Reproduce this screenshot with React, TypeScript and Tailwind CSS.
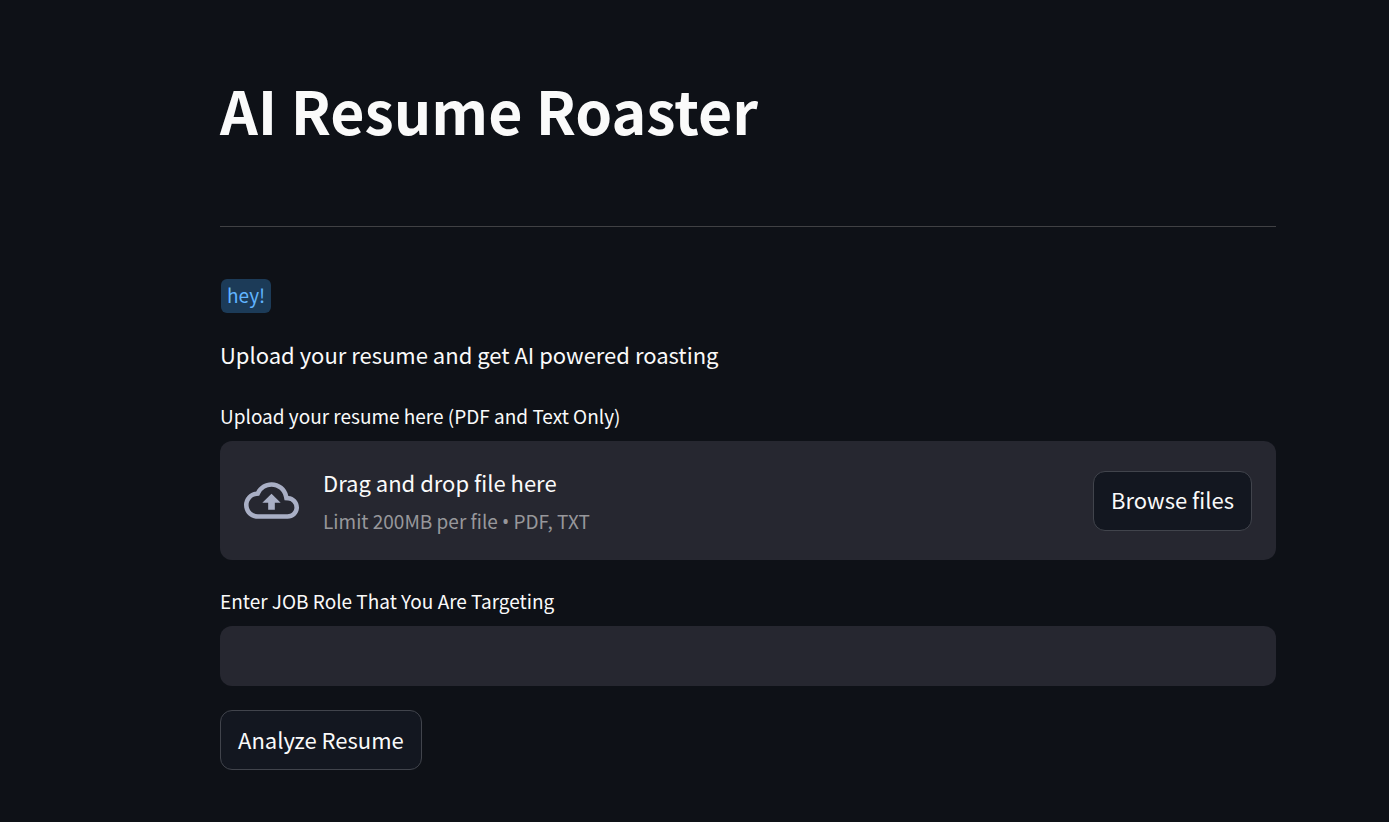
import React, { useRef } from "react";

const button =
  "h-[60px] rounded-xl border border-[#41444c] bg-[#131720] px-[17px] pb-[3px] text-[22px] leading-[36px] text-[#fafafa]";

export default function App() {
  const fileInput = useRef<HTMLInputElement>(null);
  return (
    <div className="min-h-screen bg-[#0e1117] pt-[68px] pr-[113px] pb-12 pl-[220px] font-['Noto_Sans_CJK_SC','Noto_Sans',sans-serif] text-[#fafafa]">
      <main className="flex flex-col">
        <h1 className="text-[59px] leading-[84px] font-bold">AI Resume Roaster</h1>
        <hr className="mt-[74px] border-[#404144]" />
        <div className="mt-[52px] flex pl-px">
          <span className="rounded-md bg-[#1c3b58] px-[6px] pb-[2px] text-[19px] leading-[32px] text-[#60b4ff]">
            hey!
          </span>
        </div>
        <p className="mt-6 text-[22px] leading-[34px]">Upload your resume and get AI powered roasting</p>
        <label htmlFor="resume" className="mt-7 text-[19px] leading-[34px]">
          Upload your resume here (PDF and Text Only)
        </label>
        <input ref={fileInput} id="resume" type="file" accept=".pdf,.txt" className="hidden" />
        <section className="mt-2 flex h-[119px] items-center rounded-xl bg-[#262730] px-6">
          <svg viewBox="0 0 24 24" className="size-[55px] fill-[#a9afc5]">
            <path d="M19.35 10.04A7.49 7.49 0 0 0 12 4C9.11 4 6.6 5.64 5.35 8.04A5.994 5.994 0 0 0 0 14c0 3.31 2.69 6 6 6h13c2.76 0 5-2.24 5-5 0-2.64-2.05-4.78-4.65-4.96zM19 18H6c-2.21 0-4-1.79-4-4 0-2.05 1.53-3.76 3.56-3.97l1.07-.11.5-.95A5.469 5.469 0 0 1 12 6c2.62 0 4.88 1.86 5.39 4.43l.3 1.5 1.53.11A2.98 2.98 0 0 1 22 15c0 1.65-1.35 3-3 3zM8 13h2.55v3h2.9v-3H16l-4-4z" />
          </svg>
          <div className="ml-6 flex flex-1 flex-col">
            <span className="text-[22px] leading-[40px]">Drag and drop file here</span>
            <span className="text-[19px] leading-[38px] text-[#97979b]">
              Limit 200MB per file <span className="font-['Noto_Sans',sans-serif] leading-none">•</span> PDF, TXT
            </span>
          </div>
          <button type="button" className={button} onClick={() => fileInput.current?.click()}>
            Browse files
          </button>
        </section>
        <label htmlFor="role" className="mt-6 text-[19px] leading-[34px]">
          Enter JOB Role That You Are Targeting
        </label>
        <input id="role" type="text" className="mt-2 h-[60px] rounded-xl bg-[#262730] px-[17px] text-[22px]" />
        <div className="mt-6">
          <button type="button" className={button}>Analyze Resume</button>
        </div>
      </main>
    </div>
  );
}
